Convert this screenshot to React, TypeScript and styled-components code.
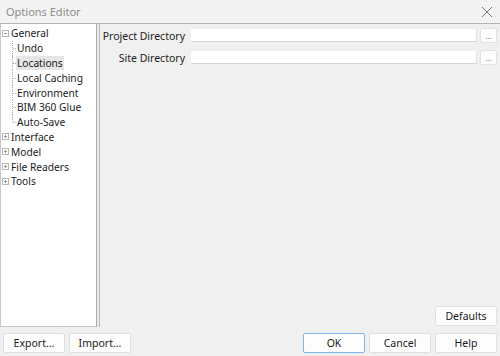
import React from 'react';
import styled, { createGlobalStyle } from 'styled-components';

const GlobalStyle = createGlobalStyle`
  html, body {
    margin: 0;
    padding: 0;
    background: #f0f0f0;
  }
  * {
    box-sizing: border-box;
  }
`;

type TreeNode = {
  label: string;
  level: number;
  expander?: 'open' | 'closed';
  last?: boolean;
  selected?: boolean;
};

const treeNodes: TreeNode[] = [
  { label: 'General', level: 0, expander: 'open' },
  { label: 'Undo', level: 1 },
  { label: 'Locations', level: 1, selected: true },
  { label: 'Local Caching', level: 1 },
  { label: 'Environment', level: 1 },
  { label: 'BIM 360 Glue', level: 1 },
  { label: 'Auto-Save', level: 1, last: true },
  { label: 'Interface', level: 0, expander: 'closed' },
  { label: 'Model', level: 0, expander: 'closed' },
  { label: 'File Readers', level: 0, expander: 'closed' },
  { label: 'Tools', level: 0, expander: 'closed' },
];

const directories = ['Project Directory', 'Site Directory'];

const Expander = ({ open }: { open: boolean }) => (
  <ExpanderBox>
    <svg width="7" height="7" viewBox="0 0 7 7">
      <rect x="0.5" y="0.5" width="6" height="6" fill="#fff" stroke="#b8b8b8" />
      <line x1="2" y1="3.5" x2="5" y2="3.5" stroke="#9a9a9a" />
      {!open && <line x1="3.5" y1="2" x2="3.5" y2="5" stroke="#9a9a9a" />}
    </svg>
  </ExpanderBox>
);

const App = () => {
  return (
    <>
      <GlobalStyle />
      <Window>
        <TitleBar>
          <Title>Options Editor</Title>
          <Close>
            <svg width="12" height="12" viewBox="0 0 12 12">
              <path d="M1 1L11 11M11 1L1 11" stroke="#777" strokeWidth="1" />
            </svg>
          </Close>
        </TitleBar>
        <Body>
          <TreePanel>
            {treeNodes.map((node) => (
              <TreeRow key={node.label} level={node.level}>
                {node.level === 0 ? (
                  <Expander open={node.expander === 'open'} />
                ) : (
                  <Guide last={node.last} />
                )}
                <TreeLabel selected={node.selected}>{node.label}</TreeLabel>
              </TreeRow>
            ))}
          </TreePanel>
          <Splitter />
          <RightPanel>
            <Form>
              {directories.map((dir) => (
                <FieldRow key={dir}>
                  <FieldLabel>{dir}</FieldLabel>
                  <FieldInput />
                  <BrowseButton>...</BrowseButton>
                </FieldRow>
              ))}
            </Form>
            <DefaultsRow>
              <Button>Defaults</Button>
            </DefaultsRow>
          </RightPanel>
        </Body>
        <Footer>
          <Button>Export...</Button>
          <Button>Import...</Button>
          <Spacer />
          <Button primary>OK</Button>
          <Button>Cancel</Button>
          <Button>Help</Button>
        </Footer>
      </Window>
    </>
  );
};

export default App;

const Window = styled.div`
  width: 500px;
  height: 356px;
  display: flex;
  flex-direction: column;
  background: #f0f0f0;
  font-family: 'Noto Sans', 'Segoe UI', sans-serif;
  font-size: 10.5px;
  color: #1a1a1a;
  overflow: hidden;
`;

const TitleBar = styled.div`
  height: 24px;
  flex: none;
  display: flex;
  align-items: center;
  justify-content: space-between;
  padding: 0 7px 0 6px;
  background: #f3f3f3;
  border-bottom: 1px solid #b4b4b4;
`;

const Title = styled.div`
  font-size: 11px;
  color: #8c8c8c;
`;

const Close = styled.div`
  display: flex;
  align-items: center;
`;

const Body = styled.div`
  flex: 1;
  display: flex;
  min-height: 0;
`;

const TreePanel = styled.div`
  width: 97px;
  flex: none;
  background: #fff;
  border-left: 1px solid #c8c8c8;
  border-bottom: 1px solid #c8c8c8;
  border-right: 1px solid #a8a8a8;
  padding-top: 2px;
  font-size: 10.2px;
`;

const TreeRow = styled.div<{ level: number }>`
  height: 14.8px;
  display: flex;
  align-items: center;
  padding-left: ${({ level }) => (level === 0 ? 1 : 11)}px;
`;

const ExpanderBox = styled.span`
  display: flex;
  width: 8px;
  height: 7px;
  align-items: center;
`;

const Guide = styled.span<{ last?: boolean }>`
  position: relative;
  width: 4px;
  height: 100%;
  border-left: 1px dotted #b0b0b0;
  ${({ last }) => (last ? 'height: 50%; align-self: flex-start;' : '')}

  &::after {
    content: '';
    position: absolute;
    left: 0;
    top: ${({ last }) => (last ? '100%' : '50%')};
    width: 3px;
    border-top: 1px dotted #b0b0b0;
  }
`;

const TreeLabel = styled.span<{ selected?: boolean }>`
  padding: 0 1px;
  line-height: 14px;
  white-space: nowrap;
  background: ${({ selected }) => (selected ? '#e6e6e6' : 'transparent')};
`;

const Splitter = styled.div`
  width: 3px;
  flex: none;
  background: #ececec;
  border-right: 1px solid #b8b8b8;
`;

const RightPanel = styled.div`
  flex: 1;
  display: flex;
  flex-direction: column;
  padding: 4px 3px 0 0;
`;

const Form = styled.div`
  flex: 1;
  display: flex;
  flex-direction: column;
  gap: 7px;
`;

const FieldRow = styled.div`
  display: flex;
  align-items: center;
  height: 15px;
`;

const FieldLabel = styled.div`
  width: 91px;
  flex: none;
  text-align: right;
  padding-right: 6px;
  color: #222;
  white-space: nowrap;
`;

const FieldInput = styled.div`
  flex: 1;
  height: 13px;
  background: #fff;
  border-bottom: 1px solid #d4d4d4;
  border-right: 1px solid #e4e4e4;
`;

const BrowseButton = styled.div`
  width: 17px;
  height: 15px;
  margin-left: 3px;
  flex: none;
  background: #fdfdfd;
  border: 1px solid #e2e2e2;
  border-radius: 2px;
  font-size: 8px;
  color: #777;
  text-align: center;
  line-height: 14px;
`;

const DefaultsRow = styled.div`
  display: flex;
  justify-content: flex-end;
  padding-bottom: 1px;
`;

const Footer = styled.div`
  height: 29px;
  flex: none;
  display: flex;
  align-items: center;
  gap: 4px;
  padding: 2px 3px 0 3px;
`;

const Spacer = styled.div`
  flex: 1;
`;

const Button = styled.div<{ primary?: boolean }>`
  width: 62px;
  height: 20px;
  display: flex;
  align-items: center;
  justify-content: center;
  background: #fdfdfd;
  border: 1px solid ${({ primary }) => (primary ? '#7eb4ea' : '#e0e0e0')};
  border-radius: 2px;
  color: #1a1a1a;
  font-size: 10.5px;
`;
